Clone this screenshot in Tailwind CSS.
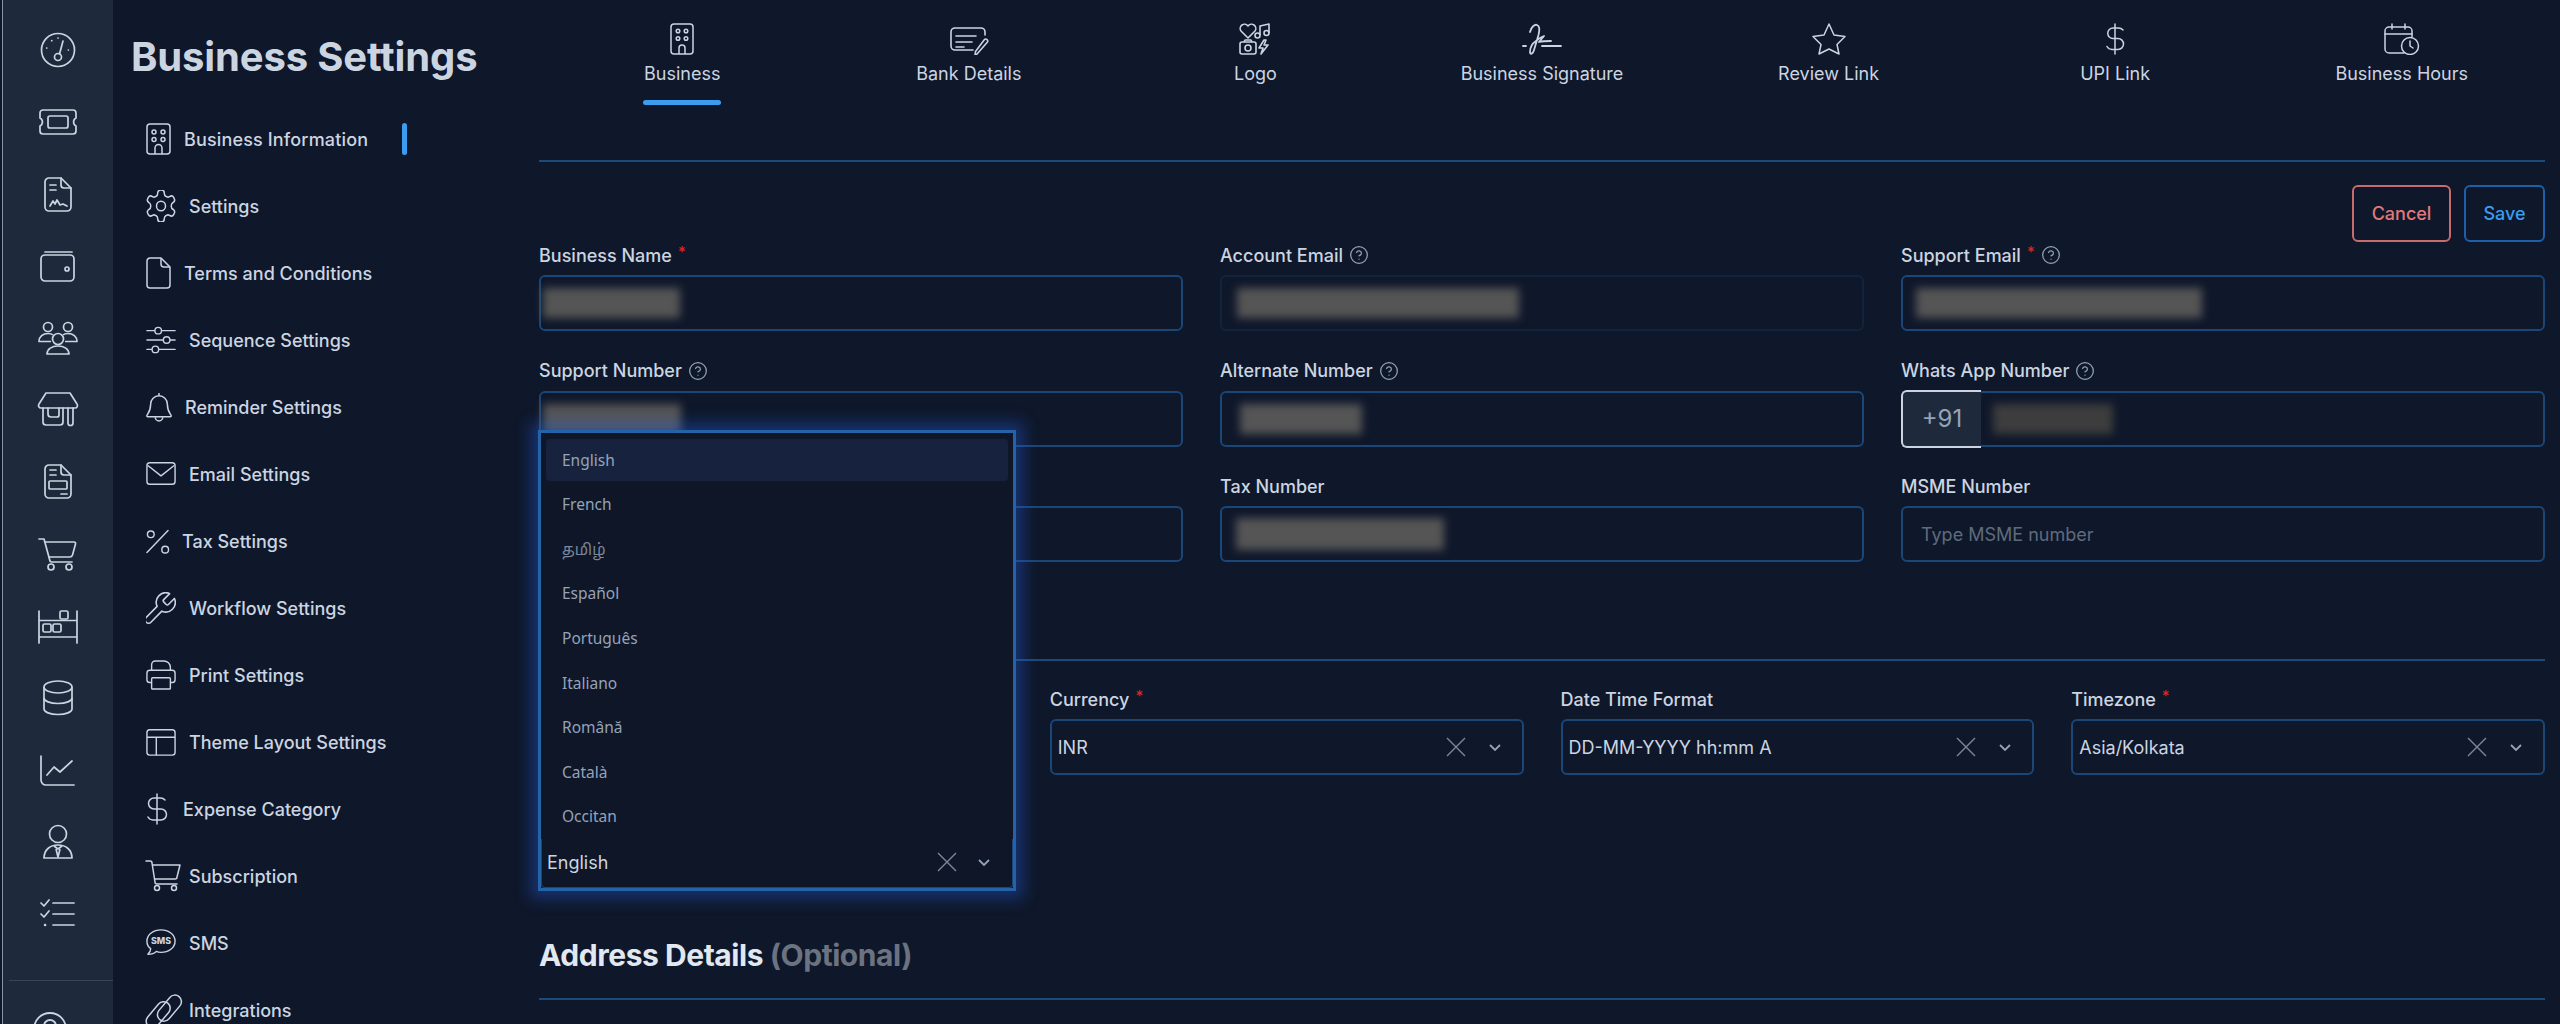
<!DOCTYPE html>
<html lang="en">
<head>
<meta charset="utf-8">
<title>Business Settings</title>
<script src="https://cdn.jsdelivr.net/npm/@tailwindcss/browser@4"></script>
</head>
<body class="bg-[#0f172a]">
<div class="flex h-[1024px] w-[2560px] overflow-hidden bg-[#0f172a] font-['Inter',sans-serif] text-[#cbd5e1]">

  <!-- icon rail -->
  <aside class="ml-[2px] flex w-[111px] shrink-0 flex-col border-l border-[#8a94a3] bg-[#1e293b] pt-[14px]">
    <div class="flex h-[72px] shrink-0 items-center justify-center"><svg class="h-10 w-11" viewBox="0 0 44 40" fill="none" stroke="#cbd5e1" stroke-width="1.7" stroke-linecap="round" stroke-linejoin="round"><circle cx="22" cy="20" r="16.5"/><circle cx="22" cy="27" r="3.5"/><path d="M23.5 24 L27 11"/><path d="M10.7 18h.1M15.7 10.7h.1M22 8h.1M32.3 20h.1"/></svg></div>
    <div class="flex h-[72px] shrink-0 items-center justify-center"><svg class="h-10 w-11" viewBox="0 0 44 40" fill="none" stroke="#cbd5e1" stroke-width="1.7" stroke-linejoin="round"><path d="M7 8H37a3 3 0 0 1 3 3v5a4.500 4.500 0 0 0 0 8v5a3 3 0 0 1-3 3H7a3 3 0 0 1-3-3v-5a4.500 4.500 0 0 0 0-8v-5a3 3 0 0 1 3-3z"/><rect x="12" y="14" width="20" height="12" rx="2"/></svg></div>
    <div class="flex h-[72px] shrink-0 items-center justify-center"><svg class="h-10 w-11" viewBox="0 0 44 40" fill="none" stroke="#cbd5e1" stroke-width="1.7" stroke-linecap="round" stroke-linejoin="round"><path d="M13 4h12l10 10v19a4 4 0 0 1-4 4H13a4 4 0 0 1-4-4V8a4 4 0 0 1 4-4z"/><path d="M25 4v7a3 3 0 0 0 3 3h7M14 11h6M14 16h6"/><path d="M14 32l3-5 2 3 2-4 3 5 3-1 4 2"/></svg></div>
    <div class="flex h-[72px] shrink-0 items-center justify-center"><svg class="h-10 w-11" viewBox="0 0 44 40" fill="none" stroke="#cbd5e1" stroke-width="1.7" stroke-linecap="round" stroke-linejoin="round"><path d="M9 6H36"/><rect x="5" y="9" width="33" height="26" rx="4"/><circle cx="31" cy="23" r="2"/></svg></div>
    <div class="flex h-[72px] shrink-0 items-center justify-center"><svg class="h-10 w-11" viewBox="0 0 44 40" fill="none" stroke="#cbd5e1" stroke-width="1.7" stroke-linejoin="round"><circle cx="22" cy="21" r="5.500"/><path d="M11 36c0-5 5-8 11-8s11 3 11 8z"/><circle cx="12" cy="9" r="4.500"/><circle cx="32" cy="9" r="4.500"/><path d="M15 23.500H3c0-5 4-8 9-8 2 0 4 .5 5 1.500"/><path d="M29 23.500H41c0-5-4-8-9-8-2 0-4 .5-5 1.500"/></svg></div>
    <div class="flex h-[72px] shrink-0 items-center justify-center"><svg class="h-10 w-11" viewBox="0 0 44 40" fill="none" stroke="#cbd5e1" stroke-width="1.7" stroke-linecap="round" stroke-linejoin="round"><path d="M10 3H34l7 11a2.500 2.500 0 0 1-2 4H5a2.500 2.500 0 0 1-2-4z"/><path d="M7 18V32a3 3 0 0 0 3 3H24a3 3 0 0 0 3-3V18"/><path d="M12 18v6a3 3 0 0 0 3 3h6a2 2 0 0 0 2-2v-7"/><path d="M32 18v15a2.500 2.500 0 0 0 5 0V18"/></svg></div>
    <div class="flex h-[72px] shrink-0 items-center justify-center"><svg class="h-10 w-11" viewBox="0 0 44 40" fill="none" stroke="#cbd5e1" stroke-width="1.7" stroke-linecap="round" stroke-linejoin="round"><path d="M13 3h12l10 10v19a4 4 0 0 1-4 4H13a4 4 0 0 1-4-4V7a4 4 0 0 1 4-4z"/><path d="M25 3v7a3 3 0 0 0 3 3h7M14 8h6M14 13h6"/><rect x="13" y="19" width="18" height="8" rx="1"/><path d="M25 32h6"/></svg></div>
    <div class="flex h-[72px] shrink-0 items-center justify-center"><svg class="h-10 w-11" viewBox="0 0 44 40" fill="none" stroke="#cbd5e1" stroke-width="1.7" stroke-linecap="round" stroke-linejoin="round"><path d="M3 5h5l6 22a2 2 0 0 0 2 1h20"/><path d="M9 8H38a1.500 1.500 0 0 1 1.500 2l-3 11a3 3 0 0 1-3 2H13"/><circle cx="15" cy="33" r="3"/><circle cx="33" cy="33" r="3"/></svg></div>
    <div class="flex h-[72px] shrink-0 items-center justify-center"><svg class="h-10 w-11" viewBox="0 0 44 40" fill="none" stroke="#cbd5e1" stroke-width="1.7" stroke-linecap="round" stroke-linejoin="round"><path d="M3 5V37M41 5V37M3 14.500H41M3 31H41"/><rect x="24" y="5" width="8" height="8" rx="1.500"/><rect x="7" y="18" width="8" height="8" rx="1.500"/><rect x="17" y="18" width="8" height="8" rx="1.500"/></svg></div>
    <div class="flex h-[72px] shrink-0 items-center justify-center"><svg class="h-10 w-11" viewBox="0 0 44 40" fill="none" stroke="#cbd5e1" stroke-width="1.7"><ellipse cx="22" cy="9" rx="14" ry="6"/><path d="M8 9V31c0 3 6 5.500 14 5.500S36 34 36 31V9"/><path d="M8 20c0 3 6 5.500 14 5.500S36 23 36 20"/></svg></div>
    <div class="flex h-[72px] shrink-0 items-center justify-center"><svg class="h-10 w-11" viewBox="0 0 44 40" fill="none" stroke="#cbd5e1" stroke-width="1.7" stroke-linecap="round" stroke-linejoin="round"><path d="M5 6V30a5 5 0 0 0 5 5H38"/><path d="M11 25l7-8 6 5 12-11"/></svg></div>
    <div class="flex h-[72px] shrink-0 items-center justify-center"><svg class="h-10 w-11" viewBox="0 0 44 40" fill="none" stroke="#cbd5e1" stroke-width="1.7" stroke-linejoin="round"><circle cx="22" cy="12" r="8.500"/><path d="M8 36c0-8 6-13 14-13s14 5 14 13z"/><path d="M18 24l4 3 4-3M20 27l2 8 2-8"/></svg></div>
    <div class="flex h-[72px] shrink-0 items-center justify-center"><svg class="h-10 w-11" viewBox="0 0 44 40" fill="none" stroke="#cbd5e1" stroke-width="1.7" stroke-linecap="round" stroke-linejoin="round"><path d="M17 9H38M17 20H38M17 31H38"/><path d="M5 9l3 3 5-6M5 20l3 3 5-6"/><path d="M9 31h.1" stroke-width="2.500"/></svg></div>
    <div class="mt-[30px] ml-[6px] h-px shrink-0 bg-[#3a4658]"></div>
    <div class="mt-[31px] ml-[25px] shrink-0"><svg class="h-11 w-11" viewBox="0 0 44 44" fill="none" stroke="#cbd5e1" stroke-width="1.800"><circle cx="22" cy="17" r="16"/><circle cx="22" cy="14" r="6"/></svg></div>
  </aside>

  <!-- settings nav -->
  <nav class="w-[426px] shrink-0">
    <h1 class="flex h-[105.500px] items-center pl-[18px] pt-[8px] text-[40px] font-bold tracking-[-0.15px] text-[#cbd5e1]">Business Settings</h1>
    <ul class="pl-[33px] text-[18px] font-medium">
      <li class="flex h-[67px] w-[261px] items-center justify-between"><span class="flex items-center gap-[13px] tracking-[0.15px]"><svg class="h-8 w-[25px]" viewBox="0 0 25 32" fill="none" stroke="#cbd5e1" stroke-width="1.500"><rect x="1" y="1" width="23" height="30" rx="3"/><circle cx="8" cy="9" r="2"/><circle cx="17" cy="9" r="2"/><circle cx="8" cy="16.500" r="2"/><circle cx="17" cy="16.500" r="2"/><path d="M9 31v-6a3.500 3.500 0 0 1 7 0v6"/></svg>Business Information</span><span class="h-8 w-[5px] rounded-full bg-[#3b9cf0]"></span></li>
      <li class="flex h-[67px] items-center gap-[13px]"><svg class="h-8 w-[30px]" viewBox="2 2 20 20" preserveAspectRatio="none" fill="none" stroke="#cbd5e1" stroke-width="1" stroke-linejoin="round"><path d="M12.220 2h-.44a2 2 0 0 0-2 2v.18a2 2 0 0 1-1 1.730l-.43.25a2 2 0 0 1-2 0l-.15-.08a2 2 0 0 0-2.730.73l-.22.38a2 2 0 0 0 .73 2.730l.15.1a2 2 0 0 1 1 1.720v.51a2 2 0 0 1-1 1.740l-.15.09a2 2 0 0 0-.73 2.730l.22.38a2 2 0 0 0 2.730.73l.15-.08a2 2 0 0 1 2 0l.43.25a2 2 0 0 1 1 1.730V20a2 2 0 0 0 2 2h.44a2 2 0 0 0 2-2v-.18a2 2 0 0 1 1-1.730l.43-.25a2 2 0 0 1 2 0l.15.08a2 2 0 0 0 2.730-.73l.22-.39a2 2 0 0 0-.73-2.730l-.15-.08a2 2 0 0 1-1-1.740v-.5a2 2 0 0 1 1-1.740l.15-.09a2 2 0 0 0 .73-2.730l-.22-.38a2 2 0 0 0-2.730-.73l-.15.08a2 2 0 0 1-2 0l-.43-.25a2 2 0 0 1-1-1.730V4a2 2 0 0 0-2-2z"/><circle cx="12" cy="12" r="3"/></svg>Settings</li>
      <li class="flex h-[67px] items-center gap-[13px]"><svg class="h-8 w-[25px]" viewBox="0 0 25 32" fill="none" stroke="#cbd5e1" stroke-width="1.500" stroke-linejoin="round"><path d="M4 1h11l9 9v18a3 3 0 0 1-3 3H4a3 3 0 0 1-3-3V4a3 3 0 0 1 3-3z"/><path d="M15 1v6a3 3 0 0 0 3 3h6"/></svg>Terms and Conditions</li>
      <li class="flex h-[67px] items-center gap-[13px]"><svg class="h-8 w-[30px] overflow-visible" viewBox="0 0 32 32" fill="none" stroke="#cbd5e1" stroke-width="1.500" stroke-linecap="round"><path d="M1 6H9M17 6H31M1 16H18M26 16H31M1 26H6M14 26H31"/><circle cx="13" cy="6" r="3.500"/><circle cx="22" cy="16" r="3.500"/><circle cx="10" cy="26" r="3.500"/></svg>Sequence Settings</li>
      <li class="flex h-[67px] items-center gap-[13px]"><svg class="h-8 w-[26px] overflow-visible" viewBox="0 0 28 32" fill="none" stroke="#cbd5e1" stroke-width="1.600" stroke-linejoin="round"><path d="M14 1V4M14 4a9 9 0 0 0-9 9c0 7-2 9-4 12a1 1 0 0 0 1 1.500H26a1 1 0 0 0 1-1.500c-2-3-4-5-4-12a9 9 0 0 0-9-9z"/><path d="M10 27a4 4 0 0 0 8 0"/></svg>Reminder Settings</li>
      <li class="flex h-[67px] items-center gap-[13px]"><svg class="h-8 w-[30px] overflow-visible" viewBox="0 0 32 32" fill="none" stroke="#cbd5e1" stroke-width="1.500" stroke-linejoin="round"><rect x="1" y="4" width="30" height="23" rx="3"/><path d="M2 7l14 11L30 7"/></svg>Email Settings</li>
      <li class="flex h-[67px] items-center gap-[13px]"><svg class="h-8 w-[23px] overflow-visible" viewBox="0 0 24 32" fill="none" stroke="#cbd5e1" stroke-width="1.500" stroke-linecap="round"><path d="M1 28L23 5"/><circle cx="5" cy="9" r="3.500"/><circle cx="20" cy="25" r="3.500"/></svg>Tax Settings</li>
      <li class="flex h-[67px] items-center gap-[13px]"><svg class="h-8 w-[30px]" viewBox="3.500 1.500 19 20" preserveAspectRatio="none" fill="none" stroke="#cbd5e1" stroke-width="1" stroke-linejoin="round"><path d="M14.700 6.300a1 1 0 0 0 0 1.400l1.600 1.600a1 1 0 0 0 1.400 0l3.770-3.770a6 6 0 0 1-7.940 7.940l-6.910 6.910a2.120 2.120 0 0 1-3-3l6.910-6.910a6 6 0 0 1 7.940-7.940l-3.760 3.760z"/></svg>Workflow Settings</li>
      <li class="flex h-[67px] items-center gap-[13px]"><svg class="h-8 w-[30px]" viewBox="0 0 32 32" fill="none" stroke="#cbd5e1" stroke-width="1.500" stroke-linejoin="round"><path d="M6 11V5a4 4 0 0 1 4-4h9a7 7 0 0 1 7 7v3"/><path d="M6 24H4a3 3 0 0 1-3-3v-7a3 3 0 0 1 3-3H28a3 3 0 0 1 3 3v7a3 3 0 0 1-3 3h-2"/><rect x="6" y="19" width="20" height="12" rx="1"/><path d="M25 15h.1" stroke-width="2.500"/></svg>Print Settings</li>
      <li class="flex h-[67px] items-center gap-[13px]"><svg class="h-8 w-[30px]" viewBox="0 0 32 32" fill="none" stroke="#cbd5e1" stroke-width="1.500"><rect x="1" y="3" width="30" height="27" rx="3"/><path d="M1 11H31M11 11V30"/></svg>Theme Layout Settings</li>
      <li class="flex h-[67px] items-center gap-[13px]"><svg class="h-8 w-[24px]" viewBox="0 0 24 32" fill="none" stroke="#cbd5e1" stroke-width="1.500" stroke-linecap="round"><path d="M11 1V31"/><path d="M19 7a6 6 0 0 0-5-2H8a5.500 5.500 0 0 0 0 11h7a5.500 5.500 0 0 1 0 11H7a6 6 0 0 1-5-3"/></svg>Expense Category</li>
      <li class="flex h-[67px] items-center gap-[13px]"><svg class="h-8 w-[30px] overflow-visible" viewBox="0 0 30 32" fill="none" stroke="#cbd5e1" stroke-width="1.500" stroke-linecap="round" stroke-linejoin="round"><path d="M0 1h4a2 2 0 0 1 2 2l3 19a2 2 0 0 0 2 2h20"/><path d="M7 5H34l-3 12a2 2 0 0 1-2 2H9"/><circle cx="11" cy="28" r="2.500"/><circle cx="28" cy="28" r="2.500"/></svg>Subscription</li>
      <li class="flex h-[67px] items-center gap-[13px]"><svg class="h-8 w-[30px] overflow-visible" viewBox="0 0 32 32" fill="none" stroke="#cbd5e1" stroke-width="1.500" stroke-linejoin="round"><path d="M16 2c8 0 15 5 15 12s-7 12-15 12c-2 0-3 0-5-1-2 2-4 3-9 3 2-2 3-4 3-6-3-2-4-5-4-8C1 7 8 2 16 2z"/><text x="16" y="17.500" text-anchor="middle" fill="#cbd5e1" stroke="none" font-size="9.500" font-weight="800" font-family="Inter">SMS</text></svg>SMS</li>
      <li class="flex h-[67px] items-center gap-[13px]"><svg class="h-8 w-[30px] overflow-visible" viewBox="0 0 32 32" fill="none" stroke="#cbd5e1" stroke-width="1.600"><rect x="-3" y="14" width="32" height="14" rx="7" transform="rotate(-50 13 21)"/><rect x="9" y="7" width="32" height="14" rx="7" transform="rotate(-50 25 14)"/></svg>Integrations</li>
    </ul>
  </nav>

  <!-- main -->
  <main class="relative flex w-[2006px] shrink-0 flex-col">
    <div class="grid h-[162px] shrink-0 grid-cols-7 border-b-2 border-[#1b4a78] pt-[23px] text-center text-[18px]">
      <div class="flex flex-col items-center"><svg class="h-8 w-[24px]" viewBox="0 0 24 32" fill="none" stroke="#cbd5e1" stroke-width="1.500"><rect x="1" y="1" width="22" height="30" rx="3"/><circle cx="8" cy="8" r="1.800"/><circle cx="16" cy="8" r="1.800"/><circle cx="8" cy="15.500" r="1.800"/><circle cx="16" cy="15.500" r="1.800"/><path d="M9 31v-6a3 3 0 0 1 6 0v6"/></svg><span class="relative mt-[8px] h-[42px] px-px leading-[22px]">Business<span class="absolute bottom-0 left-0 h-[5px] w-full rounded-full bg-[#3b9cf0]"></span></span></div>
      <div class="flex flex-col items-center"><svg class="h-8 w-[40px]" viewBox="0 0 40 32" fill="none" stroke="#cbd5e1" stroke-width="1.600" stroke-linecap="round" stroke-linejoin="round"><path d="M24 27H6a4 4 0 0 1-4-4V9a4 4 0 0 1 4-4H32a4 4 0 0 1 4 4v3"/><path d="M7 13H27M7 19H23M7 24H15"/><path d="M28 31l-2 1 .5-3.500 9-12a2 2 0 0 1 3 2.500z"/></svg><span class="mt-[8px] leading-[22px]">Bank Details</span></div>
      <div class="flex flex-col items-center"><svg class="h-8 w-[32px]" viewBox="0 0 32 32" fill="none" stroke="#cbd5e1" stroke-width="1.600" stroke-linejoin="round"><path d="M9 15L2 8a4.200 4.200 0 0 1 7-5 4.200 4.200 0 0 1 7 5z"/><path d="M21 12V3l9-2v9"/><circle cx="18.500" cy="12.500" r="2.500"/><circle cx="27.500" cy="10" r="2.500"/><rect x="1" y="19" width="16" height="12" rx="2"/><path d="M5 19l1-2h6l1 2"/><circle cx="9" cy="25" r="3"/><path d="M25 17l-5 8h4l-2 6 7-9h-4l2-5z"/></svg><span class="mt-[8px] leading-[22px]">Logo</span></div>
      <div class="flex flex-col items-center"><svg class="h-8 w-[40px]" viewBox="0 0 40 32" fill="none" stroke="#cbd5e1" stroke-width="1.800" stroke-linecap="round" stroke-linejoin="round"><path d="M1 23h3M20 23H39"/><path d="M8 9C9 4 13 1 15 2c3 1 2.500 6 1.500 10L12 27c-1 4-4 5-4 2 0-5 3-9 6-11 2-2 5-4 8-5l-5 6c4-1 8-1 12-1"/></svg><span class="mt-[8px] leading-[22px]">Business Signature</span></div>
      <div class="flex flex-col items-center"><svg class="h-8 w-[34px]" viewBox="0 0 34 32" fill="none" stroke="#cbd5e1" stroke-width="1.500" stroke-linejoin="round"><path d="M17 1l5 11 11 1.500-8 8 2 9.500-10-5-10 5 2-9.500-8-8L12 12z"/></svg><span class="mt-[8px] leading-[22px]">Review Link</span></div>
      <div class="flex flex-col items-center"><svg class="h-8 w-[20px]" viewBox="0 0 20 32" fill="none" stroke="#cbd5e1" stroke-width="1.500" stroke-linecap="round"><path d="M10 1V31"/><path d="M18 7a6 6 0 0 0-5-2H8a5 5 0 0 0 0 10.500h5a5.500 5.500 0 0 1 0 11H7a6 6 0 0 1-5-3"/></svg><span class="mt-[8px] leading-[22px]">UPI Link</span></div>
      <div class="flex flex-col items-center"><svg class="h-8 w-[36px]" viewBox="0 0 36 32" fill="none" stroke="#cbd5e1" stroke-width="1.500" stroke-linecap="round" stroke-linejoin="round"><path d="M20 30H5a4 4 0 0 1-4-4V8a4 4 0 0 1 4-4H24a4 4 0 0 1 4 4v6"/><path d="M1 11H28M8 1V6M21 1V6"/><circle cx="26" cy="23" r="8.500"/><path d="M26 18v5l3 2"/></svg><span class="mt-[8px] leading-[22px]">Business Hours</span></div>
    </div>

    <div class="mt-[23px] flex shrink-0 justify-end gap-[13px] text-[18px] font-medium">
      <button class="h-[57px] w-[99px] rounded-md border-2 border-[#c96a6e] text-[#e07a7a]">Cancel</button>
      <button class="h-[57px] w-[81px] rounded-md border-2 border-[#1d5fa8] text-[#3b9cf0]">Save</button>
    </div>

    <div class="mt-[1px] grid shrink-0 grid-cols-3 gap-x-[37px] gap-y-[27.500px] text-[18px]">
      <div><div class="mb-[8px] flex h-6 items-center gap-[6px] font-medium">Business Name <span class="-mt-[6px] text-[15px] text-[#dc2626]">*</span></div><div class="flex h-14 items-center rounded-md border-2 border-[#1a4678] pl-[2px]"><span class="h-[30px] w-[137px] bg-[#555] blur-[4px]"></span></div></div>
      <div><div class="mb-[8px] flex h-6 items-center gap-[6px] font-medium">Account Email <svg class="h-5 w-5" viewBox="0 0 24 24" fill="none" stroke="#94a3b8" stroke-width="1.500" stroke-linecap="round"><circle cx="12" cy="12" r="10"/><path d="M9.090 9a3 3 0 0 1 5.830 1c0 2-3 3-3 3M12 17h.01"/></svg></div><div class="flex h-14 items-center rounded-md border-2 border-[#12233d] pl-[15px]"><span class="h-[30px] w-[282px] bg-[#555] blur-[4px]"></span></div></div>
      <div><div class="mb-[8px] flex h-6 items-center gap-[6px] font-medium">Support Email <span class="-mt-[6px] text-[15px] text-[#dc2626]">*</span> <svg class="h-5 w-5" viewBox="0 0 24 24" fill="none" stroke="#94a3b8" stroke-width="1.500" stroke-linecap="round"><circle cx="12" cy="12" r="10"/><path d="M9.090 9a3 3 0 0 1 5.830 1c0 2-3 3-3 3M12 17h.01"/></svg></div><div class="flex h-14 items-center rounded-md border-2 border-[#1a4678] pl-[13px]"><span class="h-[30px] w-[286px] bg-[#555] blur-[4px]"></span></div></div>

      <div><div class="mb-[8px] flex h-6 items-center gap-[6px] font-medium">Support Number <svg class="h-5 w-5" viewBox="0 0 24 24" fill="none" stroke="#94a3b8" stroke-width="1.500" stroke-linecap="round"><circle cx="12" cy="12" r="10"/><path d="M9.090 9a3 3 0 0 1 5.830 1c0 2-3 3-3 3M12 17h.01"/></svg></div><div class="flex h-14 items-center rounded-md border-2 border-[#1a4678] pl-[2px]"><span class="h-[30px] w-[138px] bg-[#555] blur-[4px]"></span></div></div>
      <div><div class="mb-[8px] flex h-6 items-center gap-[6px] font-medium">Alternate Number <svg class="h-5 w-5" viewBox="0 0 24 24" fill="none" stroke="#94a3b8" stroke-width="1.500" stroke-linecap="round"><circle cx="12" cy="12" r="10"/><path d="M9.090 9a3 3 0 0 1 5.830 1c0 2-3 3-3 3M12 17h.01"/></svg></div><div class="flex h-14 items-center rounded-md border-2 border-[#1a4678] pl-[18px]"><span class="h-[30px] w-[122px] bg-[#555] blur-[4px]"></span></div></div>
      <div><div class="mb-[8px] flex h-6 items-center gap-[6px] font-medium">Whats App Number <svg class="h-5 w-5" viewBox="0 0 24 24" fill="none" stroke="#94a3b8" stroke-width="1.500" stroke-linecap="round"><circle cx="12" cy="12" r="10"/><path d="M9.090 9a3 3 0 0 1 5.830 1c0 2-3 3-3 3M12 17h.01"/></svg></div><div class="flex h-14 items-center rounded-md border-2 border-[#1a4678]"><span class="-my-[2px] -ml-[2px] flex h-[58px] w-[80px] items-center justify-center rounded-l-md border-2 border-r-0 border-[#cbd5e1] bg-[#1e293b] text-[24px] text-[#94a3b8]">+91</span><span class="ml-[12px] h-[30px] w-[120px] bg-[#3d3d3d] blur-[4px]"></span></div></div>

      <div><div class="mb-[8px] h-6"></div><div class="h-14 rounded-md border-2 border-[#1a4678]"></div></div>
      <div><div class="mb-[8px] flex h-6 items-center font-medium">Tax Number</div><div class="flex h-14 items-center rounded-md border-2 border-[#1a4678] pl-[14px]"><span class="h-[32px] w-[208px] bg-[#555] blur-[4px]"></span></div></div>
      <div><div class="mb-[8px] flex h-6 items-center font-medium">MSME Number</div><div class="flex h-14 items-center rounded-md border-2 border-[#1a4678] pl-[18px] text-[#5f6b7c]">Type MSME number</div></div>
    </div>

    <div class="mt-[97px] shrink-0 border-t-2 border-[#1b4a78]"></div>

    <div class="mt-[26px] grid shrink-0 grid-cols-4 gap-x-[37px] text-[18px]">
      <div><div class="mb-[8px] h-6"></div><div class="h-14"></div></div>
      <div><div class="mb-[8px] flex h-6 items-center gap-[6px] font-medium">Currency <span class="-mt-[6px] text-[15px] text-[#dc2626]">*</span></div><div class="flex h-14 items-center rounded-md border-2 border-[#1a4678] pl-[6px] pr-[20px]"><span class="flex-1">INR</span><svg class="h-5 w-5" viewBox="0 0 20 20" stroke="#7c8899" stroke-width="1.400"><path d="M1 1L19 19M19 1L1 19"/></svg><svg class="ml-[22px] h-4 w-[14px]" viewBox="0 0 14 16" fill="none" stroke="#94a3b8" stroke-width="1.800"><path d="M2 6l5 5 5-5"/></svg></div></div>
      <div><div class="mb-[8px] flex h-6 items-center font-medium">Date Time Format</div><div class="flex h-14 items-center rounded-md border-2 border-[#1a4678] pl-[6px] pr-[20px]"><span class="flex-1">DD-MM-YYYY hh:mm A</span><svg class="h-5 w-5" viewBox="0 0 20 20" stroke="#7c8899" stroke-width="1.400"><path d="M1 1L19 19M19 1L1 19"/></svg><svg class="ml-[22px] h-4 w-[14px]" viewBox="0 0 14 16" fill="none" stroke="#94a3b8" stroke-width="1.800"><path d="M2 6l5 5 5-5"/></svg></div></div>
      <div><div class="mb-[8px] flex h-6 items-center gap-[6px] font-medium">Timezone <span class="-mt-[6px] text-[15px] text-[#dc2626]">*</span></div><div class="flex h-14 items-center rounded-md border-2 border-[#1a4678] pl-[6px] pr-[20px]"><span class="flex-1">Asia/Kolkata</span><svg class="h-5 w-5" viewBox="0 0 20 20" stroke="#7c8899" stroke-width="1.400"><path d="M1 1L19 19M19 1L1 19"/></svg><svg class="ml-[22px] h-4 w-[14px]" viewBox="0 0 14 16" fill="none" stroke="#94a3b8" stroke-width="1.800"><path d="M2 6l5 5 5-5"/></svg></div></div>
    </div>

    <h2 class="mt-[162px] shrink-0 text-[30px] font-bold leading-[36px] tracking-[-0.45px] text-[#e2e8f0]">Address Details <span class="text-[#6b7280]">(Optional)</span></h2>
    <div class="mt-[25px] shrink-0 border-t-2 border-[#1b4a78]"></div>

    <!-- open language menu -->
    <div class="absolute left-[-1px] top-[430px] flex h-[461px] w-[478px] flex-col border-[3px] border-[#2563a8] bg-[#0e1628] pt-[5px] shadow-[0_0_14px_8px_rgba(37,99,235,0.35)]">
      <ul class="px-[5px] font-['Noto_Sans',sans-serif] text-[15.500px] text-[#94a3b8]">
        <li class="flex h-[44.600px] items-center pl-[16px]"><span class="absolute left-[5px] right-[5px] h-[42px] rounded bg-[#17223e]"></span><span class="relative">English</span></li>
        <li class="flex h-[44.600px] items-center pl-[16px]">French</li>
        <li class="flex h-[44.600px] items-center pl-[16px] pt-[4px] font-['Noto_Sans_Tamil','Lohit_Tamil','FreeSerif','Noto_Sans',sans-serif] text-[#7a8699]">தமிழ்</li>
        <li class="flex h-[44.600px] items-center pl-[16px]">Español</li>
        <li class="flex h-[44.600px] items-center pl-[16px]">Português</li>
        <li class="flex h-[44.600px] items-center pl-[16px]">Italiano</li>
        <li class="flex h-[44.600px] items-center pl-[16px]">Română</li>
        <li class="flex h-[44.600px] items-center pl-[16px]">Català</li>
        <li class="flex h-[44.600px] items-center pl-[16px]">Occitan</li>
      </ul>
      <div class="flex flex-1 items-center rounded-b-sm border-x border-b border-[#1a4678] pb-[2px] pl-[5px] pr-[21px] text-[18px]"><span class="flex-1">English</span><svg class="h-5 w-5" viewBox="0 0 20 20" stroke="#7c8899" stroke-width="1.400"><path d="M1 1L19 19M19 1L1 19"/></svg><svg class="ml-[20px] h-4 w-[14px]" viewBox="0 0 14 16" fill="none" stroke="#94a3b8" stroke-width="1.800"><path d="M2 6l5 5 5-5"/></svg></div>
    </div>
  </main>
</div>
</body>
</html>
